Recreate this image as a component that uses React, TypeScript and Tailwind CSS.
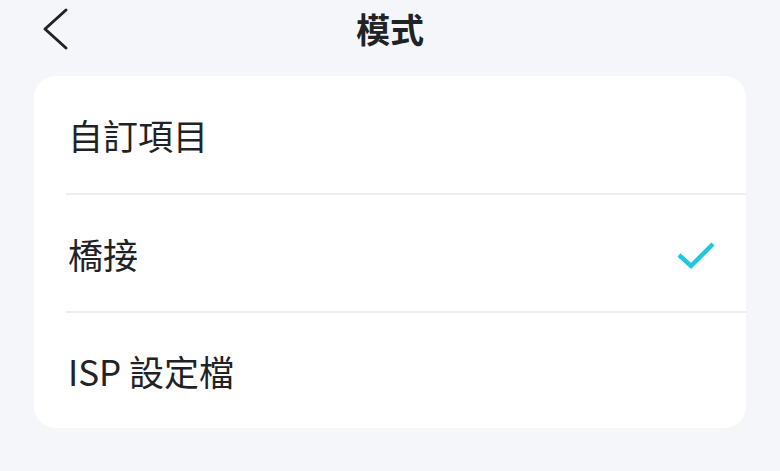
import React from "react";

const font = { fontFamily: '"Noto Sans CJK TC", "Noto Sans", sans-serif' };

function Check() {
  return (
    <svg width="40" height="32" viewBox="0 0 40 32" fill="none" className="overflow-visible">
      <polyline points="5,18 17,29 39,7" stroke="#1fc8df" strokeWidth="4.5" strokeLinecap="butt" strokeLinejoin="miter" />
    </svg>
  );
}

export default function App() {
  const items = [
    { t: "自訂項目", h: "h-[117px]" },
    { t: "橋接", h: "h-[118px]" },
    { t: "ISP 設定檔", h: "h-[117px]" },
  ];
  return (
    <div className="w-[780px] h-[471px] bg-[#f4f6fa] text-[#1f2326]" style={font}>
      <div className="h-[58px] grid grid-cols-[1fr_auto_1fr] items-center px-[40px]">
        <div className="flex items-center">
          <svg width="30" height="44" viewBox="0 0 30 44" fill="none">
            <polyline points="26,3 5,22 26,41" stroke="#1f2326" strokeWidth="3" strokeLinecap="round" strokeLinejoin="round" />
          </svg>
        </div>
        <div className="text-[34px] font-bold leading-none">模式</div>
        <div />
      </div>
      <div className="mt-[18px] mx-[34px] bg-white rounded-[22px] overflow-hidden">
        {items.map((it, i) => (
          <div key={it.t} className={`ml-[32px] pl-[2px] pr-[32px] ${it.h} flex items-center justify-between ${i > 0 ? "border-t-2 border-[#ededf1]" : ""}`}>
            <span className="text-[35px] leading-none">{it.t}</span>
            {i === 1 && <Check />}
          </div>
        ))}
      </div>
    </div>
  );
}
